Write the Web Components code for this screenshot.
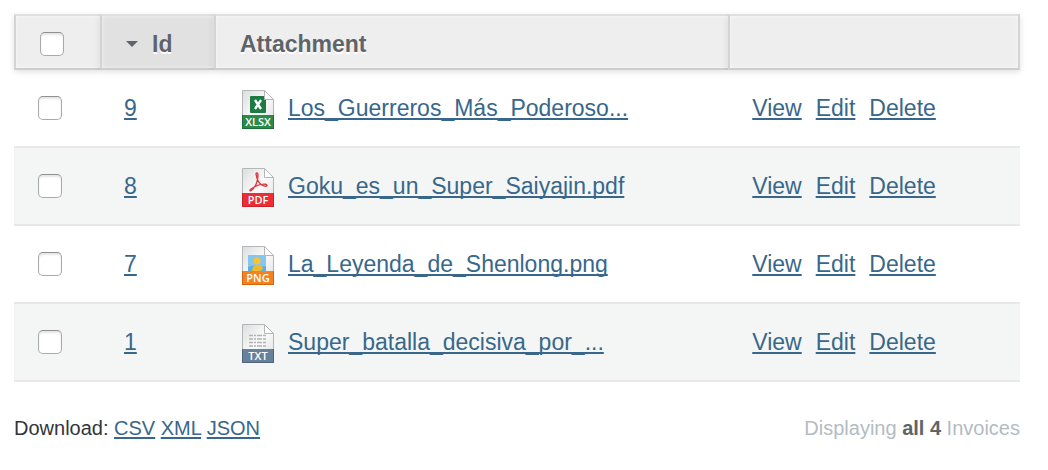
<!DOCTYPE html>
<html lang="en">
<head>
<meta charset="utf-8">
<title>Invoices</title>
<style>
body { margin: 0; background: #fff; font-family: "Liberation Sans", Arial, sans-serif; color: #323537; }
</style>
</head>
<body>
<invoice-page></invoice-page>
<script>
const linkStyle = `a { color: #38678b; text-decoration: underline; text-decoration-thickness: 2px; text-underline-offset: 2px; text-decoration-skip-ink: none; }`;

const fileTypes = {
  xlsx: { band: '#2a8a48', edge: '#1c6f36', art: `
    <rect x="12" y="9" width="16" height="17" rx="1" fill="#1d7a43"/>
    <path d="M17 13l6 9M23 13l-6 9" stroke="#fff" stroke-width="2.400"/>` },
  pdf: { band: '#ee2c35', edge: '#c9222b', art: `
    <path d="M13 25.500c3.500-1.500 7.500-9 6.800-16.500-.1-1.500-2-1.200-1.700.5.7 5.500 4 11.500 9.700 11.700 1.800 0 1.400-1.800-.4-2-5.500-.4-10.700 1.700-14.900 5.300-1 1-.5 1.500.5 1z" fill="none" stroke="#de3a40" stroke-width="1.400"/>` },
  png: { band: '#f58220', edge: '#d0670f', art: `
    <rect x="10" y="12" width="18" height="16" fill="#86c5ee"/>
    <path d="M10 24q5-2 9-1t9 0v5H10z" fill="#56b0e5"/>
    <circle cx="19" cy="18" r="3.500" fill="#f8c52e"/>
    <path d="M14 28q1-6 5-6 5 0 6 4l-3 2z" fill="#f3b92b"/>` },
  txt: { band: '#68819b', edge: '#4d647c', art: `
    <path d="M11 14.500h17M11 18h17M11 21.500h17M11 25h17" stroke="#b0b2b4" stroke-width="1.500" stroke-dasharray="4 1 2 1 5 1"/>` }
};

customElements.define('file-icon', class extends HTMLElement {
  connectedCallback() {
    const kind = this.getAttribute('type');
    const type = fileTypes[kind];
    this.attachShadow({ mode: 'open' }).innerHTML = `
      <style>
        :host { display: block; flex: none; width: 38px; height: 42px; }
        svg { display: block; }
        text { font: 600 11px "Open Sans", sans-serif; fill: #fff; }
      </style>
      <svg width="38" height="42" viewBox="0 0 38 42" role="img" aria-label="${kind} file">
        <defs><linearGradient id="paper" x1="0" y1="0" x2="1" y2="1">
          <stop offset="0" stop-color="#dcddde"/><stop offset=".5" stop-color="#fbfbfb"/><stop offset="1" stop-color="#dddedf"/>
        </linearGradient></defs>
        <path d="M4.500 3.500h22l9 9v28h-31z" fill="url(#paper)" stroke="#b4b6b7"/>
        ${type.art}
        <path d="M26.500 3.500v9h9z" fill="#fff" stroke="#b4b6b7"/>
        <path d="M4 28h32v14H4z" fill="${type.band}"/>
        <path d="M4.500 28v13.500h31V28" fill="none" stroke="${type.edge}"/>
        <text x="20" y="39" text-anchor="middle">${kind.toUpperCase()}</text>
      </svg>`;
  }
});

customElements.define('invoice-table', class extends HTMLElement {
  connectedCallback() {
    const rows = [
      [9, 'xlsx', 'Los_Guerreros_Más_Poderoso...'],
      [8, 'pdf', 'Goku_es_un_Super_Saiyajin.pdf'],
      [7, 'png', 'La_Leyenda_de_Shenlong.png'],
      [1, 'txt', 'Super_batalla_decisiva_por_...']
    ];
    this.attachShadow({ mode: 'open' }).innerHTML = `
      <style>
        :host { display: block; font-size: 23px; line-height: 28px; }
        * { box-sizing: border-box; }
        ${linkStyle}
        table { width: 100%; table-layout: fixed; border-collapse: separate; border-spacing: 0; }
        .pick { width: 86px; }
        .id { width: 114px; }
        .actions { width: 29%; }
        th, td { padding: 0 24px; text-align: left; }
        th {
          height: 56px; padding-top: 4px; background: #eee; color: #5e6469; font-weight: 700;
          border: 2px solid #cdcdcd; border-top-color: #dfdfdf; border-left-color: #d4d4d4; border-right: 0;
          box-shadow: 0 2px 6px rgba(0,0,0,.12), inset 0 0 4px rgba(255,255,255,.6);
          text-shadow: 0 2px 0 #fff;
        }
        th:last-child { border-right: 2px solid #d4d4d4; }
        th.id { background: #e1e1e1; }
        .sort { display: flex; align-items: center; gap: 14px; }
        .sort svg { display: block; }
        td { height: 78px; border-bottom: 2px solid #e8e8e8; }
        tr:nth-child(even) td { background: #f4f6f5; }
        input {
          appearance: none; display: block; width: 24px; height: 24px; margin: 0;
          background: #fff; border: 1px solid #a9a9a9; border-top-color: #8f8f8f; border-radius: 5px;
          box-shadow: inset 0 2px 2px rgba(0,0,0,.1);
        }
        .file { display: flex; align-items: center; gap: 12px; white-space: nowrap; }
        .links { display: flex; gap: 14px; }
      </style>
      <table>
        <thead><tr>
          <th class="pick"><input type="checkbox" aria-label="Select all"></th>
          <th class="id" aria-sort="descending"><span class="sort"><svg width="12" height="12" viewBox="0 0 12 12" aria-hidden="true"><path d="M0 3h12L6 9z" fill="#5e6469"/></svg>Id</span></th>
          <th>Attachment</th>
          <th class="actions"></th>
        </tr></thead>
        <tbody>${rows.map(([id, type, name]) => `
          <tr>
            <td><input type="checkbox" aria-label="Select invoice ${id}"></td>
            <td><a href="#${id}">${id}</a></td>
            <td><div class="file"><file-icon type="${type}"></file-icon><a href="#file-${id}">${name}</a></div></td>
            <td><div class="links"><a href="#${id}">View</a><a href="#edit-${id}">Edit</a><a href="#delete-${id}">Delete</a></div></td>
          </tr>`).join('')}
        </tbody>
      </table>`;
  }
});

customElements.define('table-footer', class extends HTMLElement {
  connectedCallback() {
    this.attachShadow({ mode: 'open' }).innerHTML = `
      <style>
        :host { display: flex; justify-content: space-between; padding-top: 34px; font-size: 20px; line-height: 24px; }
        ${linkStyle}
        .count { color: #b3bcc1; }
        b { color: #5e6469; }
      </style>
      <div>Download: <a href="#csv">CSV</a> <a href="#xml">XML</a> <a href="#json">JSON</a></div>
      <div class="count">Displaying <b>all 4</b> Invoices</div>`;
  }
});

customElements.define('invoice-page', class extends HTMLElement {
  connectedCallback() {
    this.attachShadow({ mode: 'open' }).innerHTML = `
      <style>:host { display: block; padding: 14px 28px 28px 14px; }</style>
      <invoice-table></invoice-table>
      <table-footer></table-footer>`;
  }
});
</script>
</body>
</html>
